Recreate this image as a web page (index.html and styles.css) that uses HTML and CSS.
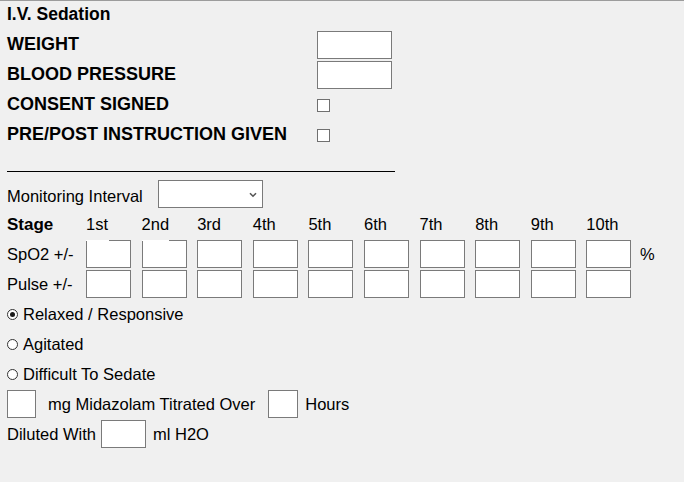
FILE: index.html
```html
<!DOCTYPE html>
<html>
<head>
<meta charset="utf-8">
<link rel="stylesheet" href="styles.css">
</head>
<body>
<div class="page">
  <div class="title">I.V. Sedation</div>
  <div class="form">
    <div class="lbl">WEIGHT</div><div><div class="field wide"></div></div>
    <div class="lbl">BLOOD PRESSURE</div><div><div class="field wide"></div></div>
    <div class="lbl">CONSENT SIGNED</div><div><div class="check"></div></div>
    <div class="lbl">PRE/POST INSTRUCTION GIVEN</div><div><div class="check"></div></div>
  </div>
  <div class="rule"></div>
  <div class="row monitor">
    <span class="mlabel">Monitoring Interval</span>
    <div class="select"><svg width="8" height="6" viewBox="0 0 8 6"><path d="M1 1.2 L4 4.2 L7 1.2" fill="none" stroke="#555" stroke-width="1.6"/></svg></div>
  </div>
  <div class="grid">
    <div class="stage">Stage</div>
    <div class="t">1st</div><div class="t">2nd</div><div class="t">3rd</div><div class="t">4th</div><div class="t">5th</div>
    <div class="t">6th</div><div class="t">7th</div><div class="t">8th</div><div class="t">9th</div><div class="t">10th</div><div></div>

    <div class="t">SpO2 +/-</div>
    <div><div class="field cell glitch1"></div></div>
    <div><div class="field cell glitch2"></div></div>
    <div><div class="field cell"></div></div>
    <div><div class="field cell"></div></div>
    <div><div class="field cell"></div></div>
    <div><div class="field cell"></div></div>
    <div><div class="field cell"></div></div>
    <div><div class="field cell"></div></div>
    <div><div class="field cell"></div></div>
    <div><div class="field cell"></div></div>
    <div class="t pct">%</div>

    <div class="t">Pulse +/-</div>
    <div><div class="field cell"></div></div>
    <div><div class="field cell"></div></div>
    <div><div class="field cell"></div></div>
    <div><div class="field cell"></div></div>
    <div><div class="field cell"></div></div>
    <div><div class="field cell"></div></div>
    <div><div class="field cell"></div></div>
    <div><div class="field cell"></div></div>
    <div><div class="field cell"></div></div>
    <div><div class="field cell"></div></div>
    <div></div>
  </div>
  <div class="row radio-row"><span class="radio checked"></span><span class="t">Relaxed / Responsive</span></div>
  <div class="row radio-row"><span class="radio"></span><span class="t">Agitated</span></div>
  <div class="row radio-row"><span class="radio"></span><span class="t">Difficult To Sedate</span></div>
  <div class="row">
    <div class="field small"></div>
    <span class="t mg">mg Midazolam Titrated Over</span>
    <div class="field hours"></div>
    <span class="t hrs">Hours</span>
  </div>
  <div class="row">
    <span class="t dil">Diluted With</span>
    <div class="field cell"></div>
    <span class="t ml">ml H2O</span>
  </div>
</div>
</body>
</html>
```
FILE: styles.css
```css
html, body {
  margin: 0;
  padding: 0;
}
body {
  background: #f0f0f0;
  border-top: 1px solid #9c9c9c;
  font-family: "Liberation Sans", Arial, sans-serif;
  font-size: 16.5px;
  color: #000;
  height: 481px;
}
.page {
  padding-left: 7px;
}
.title {
  height: 29px;
  font-weight: bold;
  font-size: 17.5px;
  display: flex;
  align-items: center;
  padding-bottom: 2px;
  box-sizing: border-box;
}
.form {
  display: grid;
  grid-template-columns: 310px auto;
  grid-auto-rows: 30px;
  align-items: center;
}
.form > div {
  display: flex;
  align-items: center;
}
.lbl {
  font-weight: bold;
  font-size: 18px;
  padding-bottom: 1px;
}
.field {
  background: #fff;
  border: 1px solid #7a7a7a;
  box-sizing: border-box;
  height: 28px;
}
.field.wide {
  width: 75px;
}
.check {
  width: 13px;
  height: 13px;
  background: #fff;
  border: 1px solid #707070;
  box-sizing: border-box;
}
.rule {
  margin-top: 21px;
  width: 388px;
  height: 1px;
  background: #000;
}
.row {
  display: flex;
  align-items: center;
  height: 30px;
}
.t {
  padding-top: 1px;
}
.monitor {
  margin-top: 7px;
}
.mlabel {
  width: 151px;
  padding-top: 4px;
}
.select {
  width: 105px;
  height: 28px;
  background: #fff;
  border: 1px solid #7a7a7a;
  box-sizing: border-box;
  display: flex;
  align-items: center;
  justify-content: flex-end;
  padding-right: 5px;
  padding-top: 2px;
}
.grid {
  display: grid;
  grid-template-columns: 79px repeat(10, 55.6px) auto;
  grid-auto-rows: 30px;
  align-items: center;
}
.grid > div {
  display: flex;
  align-items: center;
}
.stage {
  font-weight: bold;
  font-size: 17px;
  padding-top: 1px;
}
.cell {
  width: 45px;
  position: relative;
}
.glitch1::before,
.glitch2::before {
  content: "";
  position: absolute;
  top: -1px;
  left: -1px;
  height: 1px;
  background: #fff;
}
.glitch1::before {
  width: 23px;
}
.glitch2::before {
  width: 27px;
}
.pct {
  margin-left: -2px;
}
.radio-row .radio {
  width: 11px;
  height: 11px;
  border: 1px solid #333;
  border-radius: 50%;
  background: #fff;
  box-sizing: border-box;
  margin-right: 5px;
  display: flex;
  align-items: center;
  justify-content: center;
}
.radio.checked::after {
  content: "";
  width: 5px;
  height: 5px;
  border-radius: 50%;
  background: #1a1a1a;
}
.small {
  width: 29px;
}
.mg {
  margin-left: 12px;
}
.hours {
  width: 30px;
  margin-left: 13px;
}
.hrs {
  margin-left: 7px;
}
.dil {
  width: 94px;
}
.ml {
  margin-left: 7px;
}
```
